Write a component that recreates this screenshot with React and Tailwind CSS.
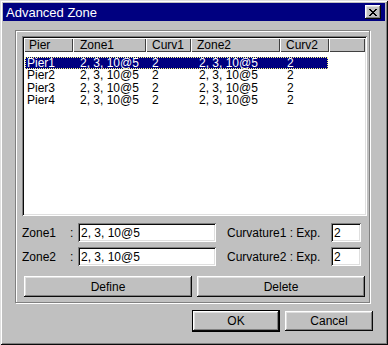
import React from "react";

const raised =
  "shadow-[inset_-1px_-1px_#0a0a0a,inset_1px_1px_#ffffff,inset_-2px_-2px_#808080,inset_2px_2px_#dfdfdf]";
const sunken =
  "shadow-[inset_1px_1px_#808080,inset_-1px_-1px_#ffffff,inset_2px_2px_#0a0a0a,inset_-2px_-2px_#dfdfdf]";

const columns = [
  { label: "Pier", w: "w-[49px]", pl: "pl-[5px]" },
  { label: "Zone1", w: "w-[73px]", pl: "pl-[7px]" },
  { label: "Curv1", w: "w-[45px]", pl: "pl-[6px]" },
  { label: "Zone2", w: "w-[89px]", pl: "pl-[6px]" },
  { label: "Curv2", w: "w-[49px]", pl: "pl-[6px]" },
];

const rows = [
  { pier: "Pier1", zone1: "2, 3, 10@5", curv1: "2", zone2: "2, 3, 10@5", curv2: "2" },
  { pier: "Pier2", zone1: "2, 3, 10@5", curv1: "2", zone2: "2, 3, 10@5", curv2: "2" },
  { pier: "Pier3", zone1: "2, 3, 10@5", curv1: "2", zone2: "2, 3, 10@5", curv2: "2" },
  { pier: "Pier4", zone1: "2, 3, 10@5", curv1: "2", zone2: "2, 3, 10@5", curv2: "2" },
];

const Field = ({ label, value, curvLabel, curvValue, className = "" }) => (
  <div className={`flex items-center h-[19px] ${className}`}>
    <span className="w-[48px]">{label}</span>
    <span className="w-[8px]">:</span>
    <div className={`w-[138px] h-[19px] bg-white ${sunken} flex items-center pl-[3px]`}>{value}</div>
    <span className="ml-[11px] w-[104px]">{curvLabel}</span>
    <div className={`w-[30px] h-[19px] bg-white ${sunken} flex items-center pl-[3px]`}>{curvValue}</div>
  </div>
);

export default function App() {
  return (
    <div
      className={`w-[388px] h-[345px] bg-[#c0c0c0] p-[3px] flex flex-col text-[12px] text-black font-['Liberation_Sans',Arial,sans-serif] shadow-[inset_1px_1px_#dfdfdf,inset_-1px_-1px_#0a0a0a,inset_2px_2px_#ffffff,inset_-2px_-2px_#808080]`}
    >
      {/* title bar */}
      <div className="h-[18px] bg-[#000080] flex items-center justify-between pl-[3px] pr-[4px]">
        <span className="text-white text-[13px] leading-none">Advanced Zone</span>
        <div className={`w-[16px] h-[14px] bg-[#c0c0c0] ${raised} flex items-center justify-center`}>
          <svg width="8" height="7" viewBox="0 0 8 7" shapeRendering="crispEdges">
            <path d="M0 0h2v1h1v1h2V1h1V0h2v1H7v1H6v1H5v1h1v1h1v1h1v1H6V6H5V5H3v1H2v1H0V6h1V5h1V4h1V3H2V2H1V1H0z" fill="#000" />
          </svg>
        </div>
      </div>

      {/* group box */}
      <div className="ml-[12px] mt-[9px] w-[355px] h-[273px] border border-[#808080] shadow-[inset_1px_1px_#ffffff,1px_1px_#ffffff] pl-[6px] pt-[5px]">
        {/* list view */}
        <div className={`w-[345px] h-[180px] bg-white ${sunken} p-[2px]`}>
          <div className="flex h-[14px] leading-[14px]">
            {columns.map((c) => (
              <div
                key={c.label}
                className={`${c.w} ${c.pl} bg-[#c0c0c0] shadow-[inset_1px_1px_#ffffff,inset_-1px_-1px_#404040]`}
              >
                {c.label}
              </div>
            ))}
            <div className="flex-1 bg-[#c0c0c0] shadow-[inset_1px_1px_#ffffff,inset_-1px_-1px_#404040]" />
          </div>
          <div className="pt-[5px] pl-[1px]">
            {rows.map((r, i) => {
              const sel = i === 0;
              return (
                <div
                  key={r.pier}
                  className={`flex w-[303px] items-center leading-[12px] ${
                    sel
                      ? "h-[12px] bg-[#000080] text-white outline-1 outline-dotted outline-[#ffff7f] -outline-offset-1"
                      : "h-[12.5px]"
                  }`}
                >
                  <span className="w-[48px] pl-[2px]">{r.pier}</span>
                  <span className="w-[73px] pl-[7px]">{r.zone1}</span>
                  <span className="w-[45px] pl-[6px]">{r.curv1}</span>
                  <span className="w-[89px] pl-[8px]">{r.zone2}</span>
                  <span className="w-[48px] pl-[7px]">{r.curv2}</span>
                </div>
              );
            })}
          </div>
        </div>

        <Field className="mt-[7px]" label="Zone1" value="2, 3, 10@5" curvLabel="Curvature1 : Exp." curvValue="2" />
        <Field className="mt-[5px]" label="Zone2" value="2, 3, 10@5" curvLabel="Curvature2 : Exp." curvValue="2" />

        <div className="flex gap-[5px] ml-[2px] mt-[10px]">
          <button className={`w-[168px] h-[21px] bg-[#c0c0c0] ${raised}`}>Define</button>
          <button className={`w-[168px] h-[21px] bg-[#c0c0c0] ${raised}`}>Delete</button>
        </div>
      </div>

      {/* dialog buttons */}
      <div className="flex justify-end items-start gap-[5px] mt-[7px] pr-[12px]">
        <div className="w-[88px] h-[22px] border border-black">
          <button className={`w-full h-full bg-[#c0c0c0] ${raised}`}>OK</button>
        </div>
        <button className={`mt-[1px] w-[88px] h-[20px] bg-[#c0c0c0] ${raised}`}>Cancel</button>
      </div>
    </div>
  );
}
